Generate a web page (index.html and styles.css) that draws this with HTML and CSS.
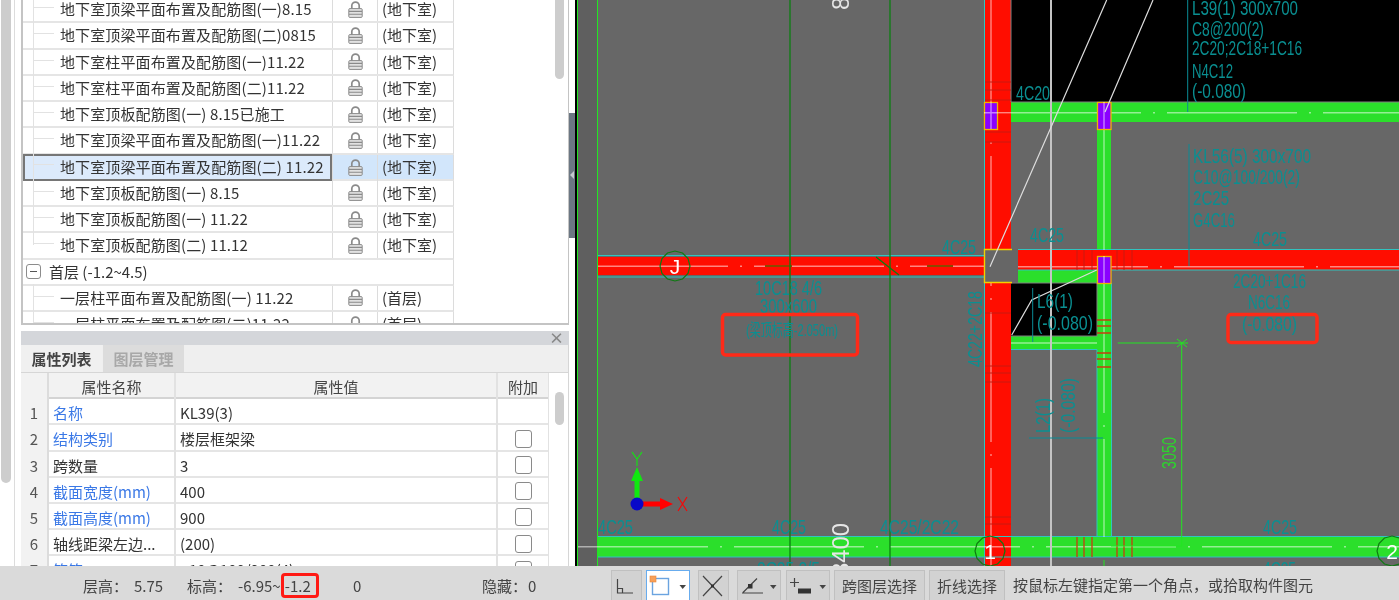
FILE: index.html
```html
<!DOCTYPE html>
<html lang="zh-CN">
<head>
<meta charset="utf-8">
<title>图纸管理</title>
<link rel="stylesheet" href="styles.css">
</head>
<body>
<svg class="defs" width="0" height="0" aria-hidden="true">
  <symbol id="lock" viewBox="0 0 15 17">
    <path d="M3.8 8V4.8a3.7 3.7 0 0 1 7.4 0V8" fill="none" stroke="#8a8a8a" stroke-width="1.7"/>
    <rect x="0.8" y="7.6" width="13.4" height="8.8" rx="1" fill="#e2e2e2" stroke="#8a8a8a"/>
    <path d="M1 10.4h13M1 13.2h13" stroke="#8a8a8a" stroke-width="1.1"/>
  </symbol>
</svg>
<div class="app">
  <div class="main">
    <aside class="sidebar">
      <div class="rail"><div class="rail-thumb"></div></div>
      <div class="panels">
        <section class="tree">
          <div class="tree-table">
            <div class="row"><div class="name">地下室顶梁平面布置及配筋图(一)8.15</div><div class="lock"><svg><use href="#lock"/></svg></div><div class="layer">(地下室)</div></div>
            <div class="row"><div class="name">地下室顶梁平面布置及配筋图(二)0815</div><div class="lock"><svg><use href="#lock"/></svg></div><div class="layer">(地下室)</div></div>
            <div class="row"><div class="name">地下室柱平面布置及配筋图(一)11.22</div><div class="lock"><svg><use href="#lock"/></svg></div><div class="layer">(地下室)</div></div>
            <div class="row"><div class="name">地下室柱平面布置及配筋图(二)11.22</div><div class="lock"><svg><use href="#lock"/></svg></div><div class="layer">(地下室)</div></div>
            <div class="row"><div class="name">地下室顶板配筋图(一) 8.15已施工</div><div class="lock"><svg><use href="#lock"/></svg></div><div class="layer">(地下室)</div></div>
            <div class="row"><div class="name">地下室顶梁平面布置及配筋图(一)11.22</div><div class="lock"><svg><use href="#lock"/></svg></div><div class="layer">(地下室)</div></div>
            <div class="row selected"><div class="name">地下室顶梁平面布置及配筋图(二) 11.22</div><div class="lock"><svg><use href="#lock"/></svg></div><div class="layer">(地下室)</div></div>
            <div class="row"><div class="name">地下室顶板配筋图(一) 8.15</div><div class="lock"><svg><use href="#lock"/></svg></div><div class="layer">(地下室)</div></div>
            <div class="row"><div class="name">地下室顶板配筋图(一) 11.22</div><div class="lock"><svg><use href="#lock"/></svg></div><div class="layer">(地下室)</div></div>
            <div class="row last"><div class="name">地下室顶板配筋图(二) 11.12</div><div class="lock"><svg><use href="#lock"/></svg></div><div class="layer">(地下室)</div></div>
            <div class="row group"><span class="toggle"></span><span>首层 (-1.2~4.5)</span></div>
            <div class="row"><div class="name">一层柱平面布置及配筋图(一) 11.22</div><div class="lock"><svg><use href="#lock"/></svg></div><div class="layer">(首层)</div></div>
            <div class="row"><div class="name">一层柱平面布置及配筋图(二)11.22</div><div class="lock"><svg><use href="#lock"/></svg></div><div class="layer">(首层)</div></div>
          </div>
          <div class="tree-thumb"></div>
        </section>
        <section class="props">
          <div class="props-title"><span class="close">×</span></div>
          <div class="tabs"><div class="tab active">属性列表</div><div class="tab">图层管理</div></div>
          <div class="props-body">
            <div class="grid">
              <div class="pr head"><div class="c-no"></div><div class="c-name">属性名称</div><div class="c-val">属性值</div><div class="c-add">附加</div></div>
              <div class="pr"><div class="c-no">1</div><div class="c-name blue">名称</div><div class="c-val">KL39(3)</div><div class="c-add"></div></div>
              <div class="pr"><div class="c-no">2</div><div class="c-name blue">结构类别</div><div class="c-val">楼层框架梁</div><div class="c-add"><span class="check"></span></div></div>
              <div class="pr"><div class="c-no">3</div><div class="c-name">跨数量</div><div class="c-val">3</div><div class="c-add"><span class="check"></span></div></div>
              <div class="pr"><div class="c-no">4</div><div class="c-name blue">截面宽度(mm)</div><div class="c-val">400</div><div class="c-add"><span class="check"></span></div></div>
              <div class="pr"><div class="c-no">5</div><div class="c-name blue">截面高度(mm)</div><div class="c-val">900</div><div class="c-add"><span class="check"></span></div></div>
              <div class="pr"><div class="c-no">6</div><div class="c-name">轴线距梁左边...</div><div class="c-val">(200)</div><div class="c-add"><span class="check"></span></div></div>
              <div class="pr"><div class="c-no">7</div><div class="c-name blue">箍筋</div><div class="c-val">⌀10@100/200(4)</div><div class="c-add"><span class="check"></span></div></div>
            </div>
            <div class="props-track"><div class="props-thumb"></div></div>
          </div>
        </section>
      </div>
      <div class="splitter"><div class="handle"></div></div>
    </aside>
    <main class="canvas">
      <svg class="drawing" viewBox="575 0 824 566" width="824" height="566">
        <rect class="bg" x="575" y="0" width="824" height="566"/>
        <rect class="bg-dark" x="578" y="0" width="20" height="566"/>
        <rect class="black" x="575" y="0" width="2" height="566"/>
        <line class="bright" x1="577.5" y1="0" x2="577.5" y2="566"/>
        <line class="bright" x1="597.5" y1="0" x2="597.5" y2="566"/>

        <rect class="black" x="1011" y="0" width="388" height="102"/>
        <rect class="black" x="1011" y="283" width="86" height="53"/>

        <!-- beams -->
        <rect class="green" x="1011" y="102" width="388" height="20"/>
        <rect class="green" x="1097" y="122" width="14" height="128"/>
        <rect class="green" x="1097" y="283" width="14" height="254"/>
        <rect class="green" x="1011" y="336" width="86" height="13"/>
        <rect class="green" x="1018" y="270" width="79" height="13"/>
        <rect class="green" x="598" y="537" width="801" height="20"/>
        <rect class="red" x="598" y="257" width="386" height="18"/>
        <rect class="red" x="1018" y="250" width="381" height="20"/>
        <rect class="red" x="985" y="0" width="26" height="566"/>

        <!-- beam edges -->
        <path class="cyan" d="M598 255.5H984M598 277H984M598 536.5H1399M598 557H1399M1018 249.5H1399M1018 270H1399M1011 349.5H1097M1097 349.5V537M1111.5 283V537M984.5 0V566"/>
        <path class="edge" d="M1011 0V102M1011 102H1399M1011 283H1097V336H1011"/>

        <!-- dash-dot centre lines -->
        <path class="center" d="M578 546.7H1399M598 266.2H984M1018 266.7H1399M991 0V566M1011 112.7H1399M1104 122V250M1104 283V537M1011 343H1097"/>
        <path class="center-solid" d="M991 112.7H1011"/>
        <path class="tan" d="M765 266H792M927 266H953"/>
        <line class="dk-green" x1="876" y1="257" x2="899" y2="275"/>

        <!-- stirrups -->
        <path class="stir" d="M1077 537V557M1084 537V557M1092 537V557M1117 537V557M1124 537V557M1132 537V557M1097 320H1111M1097 326H1111M1097 333H1111M1097 353H1111M1097 359H1111M1097 367H1111"/>
        <path class="stir-red" d="M1077 250V270M1084 250V270M1092 250V270M1117 250V270M1124 250V270M1132 250V270M985 82H1011M985 90H1011M985 100H1011M985 132H1011M985 142H1011M985 313H1011M985 366H1011M985 373H1011M985 382H1011M985 517H1011M985 524H1011"/>

        <!-- columns -->
        <rect class="gray-col" x="984.5" y="249.5" width="33" height="33"/>
        <path class="yellow-open" d="M1012 249.5H984.5V282.5H1012"/>
        <rect class="purple" x="984.5" y="102.5" width="13" height="27"/>
        <rect class="purple" x="1097.5" y="102.5" width="13.5" height="27"/>
        <rect class="purple" x="1097.5" y="256.5" width="13.5" height="27"/>
        <path class="center-solid" d="M991 102V129M1104 102V129M1104 256V283M984 112.7H998"/>

        <!-- drawing lines -->
        <path class="dk-green-line" d="M790 0V566M890 0V566"/>
        <line class="white-thick" x1="1051" y1="0" x2="1051" y2="566"/>
        <path class="white-thin" d="M1106.7 0L990 266.7M1153 0L1105 112M1096.7 270L1031.7 300L1011.7 335"/>
        <path class="teal-line" d="M1187.7 0V112M1189 144V266M1032.7 288V342M1029 438H1103"/>
        <path class="bright" d="M1117.7 343H1188M1181.7 343V546M1111 546H1181.7M1177 339L1187 347M1177 347L1187 339M1104 560V566"/>

        <!-- cad labels, teal -->
        <g class="cad">
          <text x="1192" y="15" textLength="106" lengthAdjust="spacingAndGlyphs">L39(1) 300x700</text>
          <text x="1192" y="36" textLength="72" lengthAdjust="spacingAndGlyphs">C8@200(2)</text>
          <text x="1192" y="55" textLength="110" lengthAdjust="spacingAndGlyphs">2C20;2C18+1C16</text>
          <text x="1192" y="78" textLength="41" lengthAdjust="spacingAndGlyphs">N4C12</text>
          <text x="1192" y="98" textLength="54" lengthAdjust="spacingAndGlyphs">(-0.080)</text>
          <text x="1016" y="100" textLength="34" lengthAdjust="spacingAndGlyphs">4C20</text>
          <text x="1193" y="163" textLength="118" lengthAdjust="spacingAndGlyphs">KL56(5) 300x700</text>
          <text x="1193" y="184" textLength="107" lengthAdjust="spacingAndGlyphs">C10@100/200(2)</text>
          <text x="1193" y="205" textLength="36" lengthAdjust="spacingAndGlyphs">2C25</text>
          <text x="1193" y="227" textLength="42" lengthAdjust="spacingAndGlyphs">G4C16</text>
          <text x="1253" y="246" textLength="34" lengthAdjust="spacingAndGlyphs">4C25</text>
          <text x="1030" y="242" textLength="34" lengthAdjust="spacingAndGlyphs">4C25</text>
          <text x="942" y="254" textLength="34" lengthAdjust="spacingAndGlyphs">4C25</text>
          <text x="1233" y="288" textLength="73" lengthAdjust="spacingAndGlyphs">2C20+1C16</text>
          <text x="1248" y="309" textLength="42" lengthAdjust="spacingAndGlyphs">N6C16</text>
          <text x="1242" y="331" textLength="55" lengthAdjust="spacingAndGlyphs">(-0.080)</text>
          <text x="1037" y="308" textLength="36" lengthAdjust="spacingAndGlyphs">L6(1)</text>
          <text x="1037" y="330" textLength="56" lengthAdjust="spacingAndGlyphs">(-0.080)</text>
          <text x="1263" y="534" textLength="34" lengthAdjust="spacingAndGlyphs">4C25</text>
          <text x="1263" y="576" textLength="33" lengthAdjust="spacingAndGlyphs">4C25</text>
          <text x="598" y="534" textLength="35" lengthAdjust="spacingAndGlyphs">4C25</text>
          <text x="772" y="534" textLength="34" lengthAdjust="spacingAndGlyphs">4C25</text>
          <text x="880" y="534" textLength="79" lengthAdjust="spacingAndGlyphs">4C25/2C22</text>
          <text x="757" y="576" textLength="63" lengthAdjust="spacingAndGlyphs">2C25 2/5</text>
          <text x="755" y="295" textLength="67" lengthAdjust="spacingAndGlyphs">10C18 4/6</text>
          <text x="760" y="313" textLength="57" lengthAdjust="spacingAndGlyphs">300x600</text>
          <text class="cad-mixed" x="746" y="336" textLength="92" lengthAdjust="spacingAndGlyphs">(梁顶标高-2.050m)</text>
          <text transform="rotate(-90 982 367)" x="982" y="367" textLength="76" lengthAdjust="spacingAndGlyphs">4C22+2C18</text>
          <text transform="rotate(-90 1050 433)" x="1050" y="433" textLength="35" lengthAdjust="spacingAndGlyphs">L2(1)</text>
          <text transform="rotate(-90 1075 433)" x="1075" y="433" textLength="55" lengthAdjust="spacingAndGlyphs">(-0.080)</text>
        </g>
        <text class="cad-green" transform="rotate(-90 1176 469)" x="1176" y="469" textLength="32" lengthAdjust="spacingAndGlyphs">3050</text>
        <text class="dim-white" transform="rotate(-90 849 576)" x="849" y="576" textLength="53" lengthAdjust="spacingAndGlyphs">8400</text>
        <text class="dim-white" transform="rotate(-90 849 10)" x="849" y="10" textLength="13" lengthAdjust="spacingAndGlyphs">8</text>

        <!-- axis bubbles -->
        <polygon class="bubble" points="690,266 688,273.500 682.500,279 675,281 667.500,279 662,273.500 660,266 662,258.500 667.500,253 675,251 682.500,253 688,258.500"/>
        <text class="axis" x="675" y="274" text-anchor="middle">J</text>
        <polygon class="bubble" points="1005,551 1003,558.500 997.500,564 990,566 982.500,564 977,558.500 975,551 977,543.500 982.500,538 990,536 997.500,538 1003,543.500"/>
        <text class="axis" x="990" y="559" text-anchor="middle">1</text>
        <polygon class="bubble" points="1407,551 1405,558.500 1399.500,564 1392,566 1384.500,564 1379,558.500 1377,551 1379,543.500 1384.500,538 1392,536 1399.500,538 1405,543.500"/>
        <text class="axis" x="1392" y="559" text-anchor="middle">2</text>

        <!-- annotation boxes -->
        <rect class="mark" x="722.500" y="314.500" width="135" height="40.500" rx="3"/>
        <rect class="mark" x="1228" y="314.500" width="89" height="28" rx="3"/>

        <!-- ucs -->
        <rect class="ucs-y" x="634.500" y="480" width="5" height="24"/>
        <polygon class="ucs-y" points="637,467 631,481 643,481"/>
        <path class="ucs-yl" d="M632 452L637 459L642 452M637 459V466"/>
        <rect class="ucs-x" x="637" y="501.500" width="24" height="5"/>
        <polygon class="ucs-x" points="673,504 660,498 660,510"/>
        <path class="ucs-xl" d="M678 497L687 511M687 497L678 511"/>
        <circle class="ucs-o" cx="637" cy="504" r="6.500"/>
      </svg>
    </main>
  </div>
  <footer class="status">
    <div class="info">
      <span class="i-label">层高&#xFF1A;</span><span class="i-h">5.75</span>
      <span class="i-label">标高&#xFF1A;</span><span class="i-range">-6.95~<span class="redbox">-1.2</span></span>
      <span class="i-zero">0</span>
      <span class="i-hide">隐藏&#xFF1A;</span><span>0</span>
    </div>
    <div class="tools">
      <button class="tool t-sq g4"><svg width="31" height="30" viewBox="611 570 31 30"><path class="ic" d="M617.5 578V592H633M617.5 587.5H622.5V592"/></svg></button>
      <button class="tool t-wide on g8"><svg width="44" height="30" viewBox="646 570 44 30"><rect x="652.500" y="577.500" width="16" height="16" fill="#fff" stroke="#6ba4e0" stroke-width="1.4"/><rect x="650" y="575" width="6" height="6" fill="#f7a05a" stroke="#e8863a" stroke-width=".6"/><path class="tri" d="M679.500 584H686L682.700 588Z"/></svg></button>
      <button class="tool t-sq g8"><svg width="31" height="30" viewBox="698 570 31 30"><path class="ic" d="M703 575L722 595M722 575L703 595"/><rect x="711" y="583.500" width="3" height="3" fill="#333"/></svg></button>
      <button class="tool t-wide g5"><svg width="44" height="30" viewBox="737 570 44 30"><path class="ic" d="M742 592H763M743 591.500L757 577.500"/><rect x="748" y="583" width="4.500" height="4.500" fill="#333"/><path class="tri" d="M770 584H776.500L773.300 588Z"/></svg></button>
      <button class="tool t-wide g4"><svg width="44" height="30" viewBox="786 570 44 30"><path class="ic" d="M790 581.500H799M794.500 577V586"/><rect x="798" y="587.500" width="13" height="5" fill="#333"/><path class="tri" d="M819.500 584H826L822.700 588Z"/></svg></button>
      <button class="tool t-cross g4">跨图层选择</button>
      <button class="tool t-poly g8">折线选择</button>
      <span class="hint">按鼠标左键指定第一个角点&#xFF0C;或拾取构件图元</span>
    </div>
  </footer>
</div>
</body>
</html>
```

FILE: styles.css
```css
* { box-sizing: border-box; }
html, body { margin: 0; padding: 0; height: 100%; overflow: hidden; background: #fff; }
body { font-family: "Noto Sans CJK SC", "Noto Sans", sans-serif; font-size: 15px; color: #333; }
.defs { display: block; height: 0; }
.app { width: 1399px; height: 600px; display: flex; flex-direction: column; overflow: hidden; filter: blur(.35px); }
.main { display: flex; height: 566px; flex: none; }

/* left column */
.sidebar { flex: 0 0 575px; display: flex; background: #fff; overflow: hidden; }
.rail { flex: 0 0 15px; border-right: 1px solid #dcdcdc; padding-left: 1px; }
.rail-thumb { width: 10px; height: 483px; background: #cdcdcd; border-radius: 0 0 5px 5px; }
.panels { flex: 0 0 548px; margin-left: 6px; display: flex; flex-direction: column; gap: 6px; }
.splitter { flex: 0 0 6px; padding-top: 113px; }
.handle { width: 6px; height: 125px; background: #6c7783; position: relative; }
.handle::after { content: ""; position: absolute; left: 1px; top: 58px; border: 4px solid transparent; border-left-width: 0; border-right: 4px solid #c4c9ce; }

/* drawing tree */
.tree { flex: 0 0 325px; border: solid #c4c4c4; border-width: 0 1px 2px 2px; display: flex; overflow: hidden; position: relative; }
.tree-table { width: 431px; margin-top: -3px; flex: none; }
.row { display: grid; grid-template-columns: 310px 45px 75px; height: 26.25px; border-bottom: 2px solid #e5e5e5; border-right: 1px solid #dcdcdc; line-height: 24px; white-space: nowrap; }
.name { position: relative; padding-left: 37px; border-right: 1px solid #dcdcdc; letter-spacing: .12px; }
.name::before { content: ""; position: absolute; left: 10px; top: -2px; bottom: -2px; border-left: 1px solid #e2e2e2; }
.name::after { content: ""; position: absolute; left: 10px; width: 21px; top: 10px; border-top: 1px solid #e2e2e2; }
.last .name::before { bottom: 13px; }
.lock { border-right: 1px solid #dcdcdc; display: flex; align-items: center; justify-content: center; }
.lock svg { width: 15px; height: 17px; }
.layer { padding-left: 4px; }
.row.selected { background: #d2e6fb; }
.row.selected .name { box-shadow: inset 0 0 0 2px #767676; background: #dceafb; margin-top: -1px; height: 27px; line-height: 26px; }
.group { display: flex; align-items: center; }
.toggle { width: 15px; height: 15px; border: 1px solid #8c8c8c; border-radius: 3px; margin: 0 8px 0 3px; position: relative; flex: none; }
.toggle::after { content: ""; position: absolute; left: 3px; right: 3px; top: 6px; border-top: 1px solid #555; }
.tree-thumb { position: absolute; right: 4px; top: 0; width: 9px; height: 79px; background: #cdcdcd; border-radius: 0 0 5px 5px; }

/* properties */
.props { flex: 1; min-height: 0; display: flex; flex-direction: column; overflow: hidden; }
.props-title { height: 14px; flex: none; background: #d4d6da; display: flex; justify-content: flex-end; align-items: center; padding-right: 5px; }
.close { font-size: 15px; line-height: 14px; color: #888; font-weight: 700; }
.tabs { height: 28px; flex: none; background: #efefef; display: flex; border-bottom: 1px solid #d6d6d6; border-right: 1px solid #d6d6d6; }
.tab { width: 81px; background: #dcdcdc; color: #a8a8a8; text-align: center; line-height: 28px; margin-right: 1px; font-weight: 700; }
.tab.active { background: #f0f0f0; color: #444; }
.props-body { flex: 1; display: flex; min-height: 0; overflow: hidden; border-right: 1px solid #d6d6d6; }
.grid { width: 528px; flex: none; }
.pr { display: grid; grid-template-columns: 28px 127px 322px 51px; height: 26.2px; line-height: 27px; border-bottom: 2px solid #e5e5e5; white-space: nowrap; }
.pr.head { background: #f2f2f2; border-bottom-color: #d4d4d4; color: #444; }
.pr.head > div { text-align: center; padding: 0; }
.c-no { background: #f2f2f2; text-align: center; color: #555; border-right: 2px solid #dcdcdc; }
.c-name { padding-left: 4px; border-right: 2px solid #e2e2e2; overflow: hidden; }
.c-val { padding-left: 4px; border-right: 2px solid #e2e2e2; }
.c-add { display: flex; align-items: center; justify-content: center; border-right: 1px solid #e2e2e2; }
.blue { color: #3a78e6; }
.check { width: 17px; height: 18px; border: 1px solid #8a8a8a; border-radius: 3px; background: #fff; }
.props-track { flex: 1; padding: 19px 0 0 6px; }
.props-thumb { width: 9px; height: 33px; border-radius: 5px; background: #cdcdcd; }

/* canvas */
.canvas { flex: 1; overflow: hidden; background: #676767; }
.drawing { display: block; }
.bg { fill: #676767; }
.bg-dark { fill: #5f5f5f; }
.black { fill: #000; }
.green { fill: #2bdf2b; }
.red { fill: #ff0d00; }
.gray-col { fill: #666; }
.purple { fill: #8a00ff; stroke: #f0b400; stroke-width: 1.3; }
.yellow-open { fill: none; stroke: #f2d000; stroke-width: 1.4; }
.cyan { fill: none; stroke: #30c4c0; stroke-width: 1; }
.edge { fill: none; stroke: #808080; stroke-width: 1; }
.center { fill: none; stroke: #fff; stroke-opacity: .5; stroke-width: 1.4; stroke-dasharray: 130 12 2 12; }
.center-solid { fill: none; stroke: #fff; stroke-opacity: .5; stroke-width: 1.4; }
.tan { fill: none; stroke: #8a4a00; stroke-width: 2; }
.dk-green { stroke: #0b7f12; stroke-width: 1.3; }
.stir { fill: none; stroke: #c83c10; stroke-width: 1.3; }
.stir-red { fill: none; stroke: #c81a10; stroke-width: 1; }
.dk-green-line { fill: none; stroke: #0b7f12; stroke-width: 1.3; }
.white-thick { stroke: #c4c4c4; stroke-width: 2; }
.white-thin { fill: none; stroke: #ddd; stroke-width: 1.2; }
.teal-line { fill: none; stroke: #0a8c96; stroke-width: 1; }
.bright { fill: none; stroke: #22e622; stroke-width: 1; }
.cad text, .cad-green, .dim-white { font-family: "Liberation Sans", "Noto Sans CJK SC", sans-serif; }
.cad text { fill: #0a8f91; font-size: 21px; }
.cad text.cad-mixed { font-size: 17px; }
.cad-green { fill: #2cd52c; font-size: 21px; }
.dim-white { fill: #e6e6e6; font-size: 24px; }
.bubble { fill: none; stroke: #0e7a12; stroke-width: 1.2; }
.axis { font-family: "Liberation Sans", sans-serif; font-size: 21px; fill: #fff; }
.mark { fill: none; stroke: #ff2a18; stroke-width: 3.5; }
.ucs-y { fill: #10e810; }
.ucs-yl { fill: none; stroke: #10e810; stroke-width: 1.1; }
.ucs-x { fill: #f00; }
.ucs-xl { fill: none; stroke: #f00; stroke-width: 1.1; }
.ucs-o { fill: #0808c8; }

/* status bar */
.status { height: 34px; flex: none; background: #dadada; display: flex; color: #444; white-space: nowrap; }
.info { flex: 0 0 611px; display: flex; align-items: center; height: 34px; padding: 4px 0 0 83px; }
.i-label { width: 51px; flex: none; }
.i-h { width: 53px; flex: none; }
.i-range { width: 115px; flex: none; }
.i-zero { width: 129px; flex: none; }
.i-hide { width: 46px; flex: none; }
.redbox { display: inline-block; height: 25px; line-height: 19px; padding: 0 5px 0 1px; border: 3px solid #ff1a14; border-radius: 4px; }
.tools { flex: 1; display: flex; align-items: flex-end; }
.tool { height: 30px; padding: 0; margin: 0; border: 1px solid #c0c0c0; border-bottom: 0; background: #d2d2d2; color: #444; font: inherit; display: flex; align-items: center; justify-content: center; }
.tool svg { display: block; flex: none; }
.ic { fill: none; stroke: #444; stroke-width: 1.2; }
.tri { fill: #444; }
.t-sq { width: 31px; }
.t-wide { width: 44px; }
.t-wide.on { background: #fff; border: 1px solid #68acee; border-bottom: 0; }
.t-cross { width: 91px; }
.t-poly { width: 76px; }
.g4 { margin-right: 4px; }
.g5 { margin-right: 5px; }
.g8 { margin-right: 8px; }
.hint { line-height: 30px; height: 30px; }
```
